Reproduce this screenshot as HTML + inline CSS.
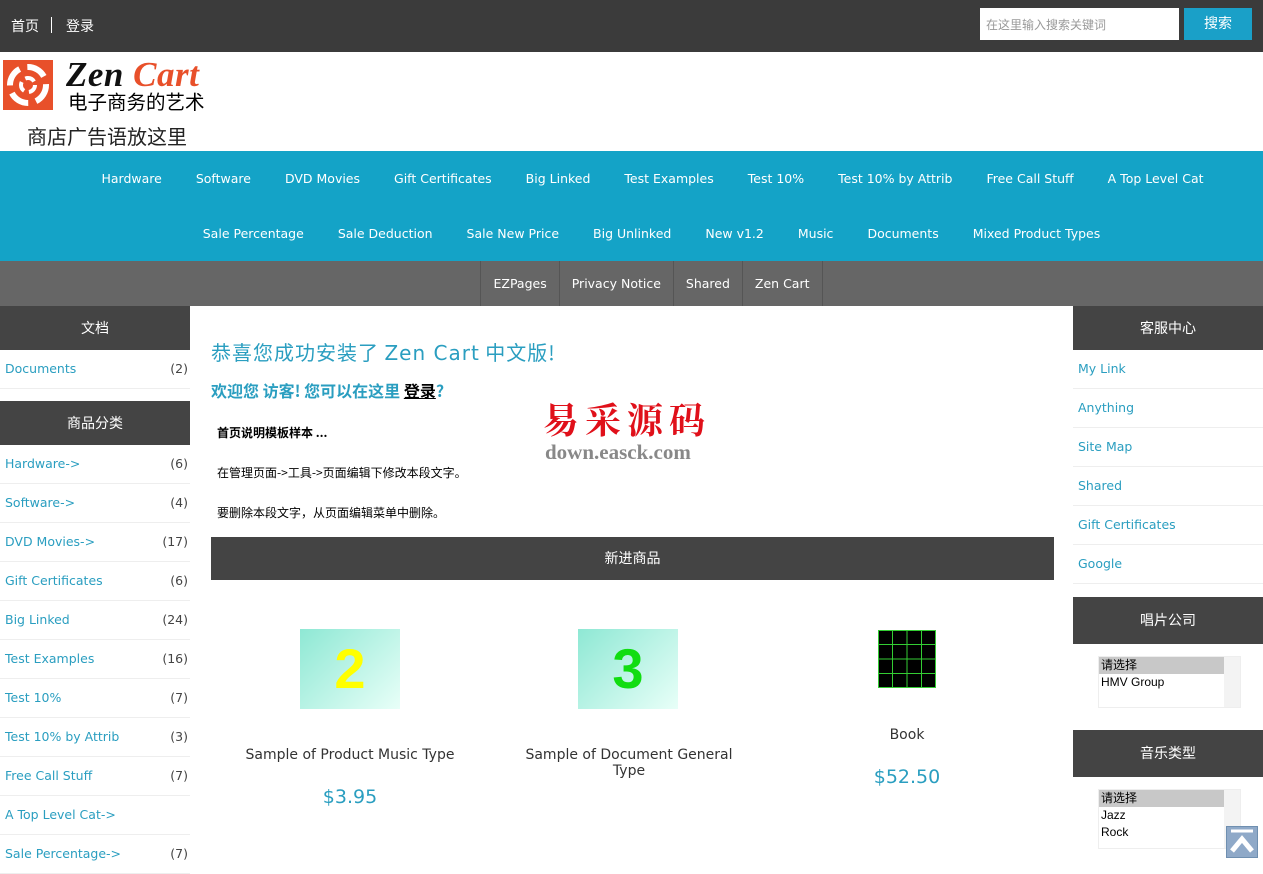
<!DOCTYPE html>
<html><head><meta charset="utf-8"><style>
*{margin:0;padding:0;box-sizing:border-box}
body{width:1263px;height:863px;overflow:hidden;background:#fff;font-family:"DejaVu Sans","Noto Sans CJK SC",sans-serif;font-size:12px;color:#000;position:relative}
.top{height:52px;background:#3b3b3b;position:relative}
.top .l{position:absolute;left:11px;top:16px;color:#fff;font-size:14px;font-family:"Liberation Sans","Noto Sans CJK SC",sans-serif}
.top .l span{display:inline-block;width:1px;height:16px;background:#fff;margin:0 14px -2px 12px}
.top input{position:absolute;left:980px;top:8px;width:199px;height:32px;border:0;background:#fff;font-size:12px;padding-left:6px;color:#999;font-family:"Noto Sans CJK SC",sans-serif}
.top .btn{position:absolute;left:1184px;top:8px;width:68px;height:32px;background:#1aa0c8;color:#fff;font-size:14px;text-align:center;line-height:32px}
.hdr{height:99px;position:relative}
.nav{background:#14a3c7;height:110px;color:#fff;font-size:12.5px}
.nav div{height:55px;display:flex;justify-content:center;align-items:center}
.nav a{padding:0 17px;white-space:nowrap}
.sub{background:#666;height:45px;display:flex;justify-content:center;padding-left:40px}
.sub a{color:#fff;border-left:1px solid #555;padding:0 12px;line-height:45px;font-size:12.5px}
.sub a:last-child{border-right:1px solid #555}
.col{position:absolute;top:306px;width:190px}
.h{background:#444;color:#fff;height:44px;line-height:44px;text-align:center;font-size:14px;font-family:"Noto Sans CJK SC",sans-serif}
.li{height:39px;border-bottom:1px solid #eee;color:#2a9ec0;font-size:12.5px;line-height:38px;padding-left:5px;position:relative}
.li b{position:absolute;right:2px;font-weight:normal;color:#444}
.sel{margin:12px 0 0 25px;width:143px;height:52px;border:1px solid #eee;font-size:12px;position:relative;overflow:hidden;font-family:"Liberation Sans","Noto Sans CJK SC",sans-serif}
.sel div{line-height:17px;padding-left:2px}
.sel .s{background:#c8c8c8;width:126px}
.sel i{position:absolute;right:0;top:0;width:16px;height:100%;background:#f3f3f3}
.p{position:absolute;text-align:center;font-size:14px;color:#333}
.pr{position:absolute;text-align:center;font-size:19px;color:#2a9ec0}
</style></head><body>
<div class="top"><div class="l">首页<span></span>登录</div><input value="在这里输入搜索关键词"><div class="btn">搜索</div></div>
<div class="hdr">
<svg style="position:absolute;left:3px;top:8px" width="50" height="50"><rect width="50" height="50" fill="#e8502a"/><circle cx="25" cy="25" r="18" fill="none" stroke="#fff" stroke-width="6" stroke-dasharray="20 8"/><circle cx="25" cy="25" r="7" fill="none" stroke="#fff" stroke-width="4" stroke-dasharray="10 5"/></svg>
<div style="position:absolute;left:66px;top:4px;font-family:'Liberation Serif',serif;font-style:italic;font-weight:bold;font-size:35px;line-height:38px;letter-spacing:0.5px"><span style="color:#111">Zen</span> <span style="color:#e8502a">Cart</span></div>
<div style="position:absolute;left:68px;top:37px;font-size:19.5px;line-height:24px;font-family:'Noto Sans CJK SC',sans-serif">电子商务的艺术</div>
<div style="position:absolute;left:27px;top:69px;font-size:20px;color:#222;font-family:'Noto Sans CJK SC',sans-serif">商店广告语放这里</div>
</div>
<div class="nav"><div style="padding-left:42px"><a>Hardware</a><a>Software</a><a>DVD Movies</a><a>Gift Certificates</a><a>Big Linked</a><a>Test Examples</a><a>Test 10%</a><a>Test 10% by Attrib</a><a>Free Call Stuff</a><a>A Top Level Cat</a></div>
<div style="padding-left:40px"><a>Sale Percentage</a><a>Sale Deduction</a><a>Sale New Price</a><a>Big Unlinked</a><a>New v1.2</a><a>Music</a><a>Documents</a><a>Mixed Product Types</a></div></div>
<div class="sub"><a>EZPages</a><a>Privacy Notice</a><a>Shared</a><a>Zen Cart</a></div>
<div class="col" style="left:0">
<div class="h">文档</div><div class="li">Documents<b>(2)</b></div>
<div style="height:12px"></div>
<div class="h">商品分类</div>
<div class="li">Hardware-&gt;<b>(6)</b></div><div class="li">Software-&gt;<b>(4)</b></div><div class="li">DVD Movies-&gt;<b>(17)</b></div><div class="li">Gift Certificates<b>(6)</b></div><div class="li">Big Linked<b>(24)</b></div><div class="li">Test Examples<b>(16)</b></div><div class="li">Test 10%<b>(7)</b></div><div class="li">Test 10% by Attrib<b>(3)</b></div><div class="li">Free Call Stuff<b>(7)</b></div><div class="li">A Top Level Cat-&gt;<b></b></div><div class="li">Sale Percentage-&gt;<b>(7)</b></div>
</div>
<div class="col" style="left:1073px">
<div class="h">客服中心</div>
<div class="li">My Link</div><div class="li">Anything</div><div class="li">Site Map</div><div class="li">Shared</div><div class="li">Gift Certificates</div><div class="li">Google</div>
<div style="height:13px"></div>
<div class="h" style="height:47px;line-height:47px">唱片公司</div>
<div class="sel"><div class="s">请选择</div><div>HMV Group</div><i></i></div>
<div style="height:22px"></div>
<div class="h" style="height:47px;line-height:47px">音乐类型</div>
<div class="sel" style="height:60px"><div class="s">请选择</div><div>Jazz</div><div>Rock</div><i></i></div>
</div>
<div style="position:absolute;left:1226px;top:826px;width:32px;height:32px;background:#8fa9c8;border:1px solid #6f8fb0"><svg width="30" height="30"><path d="M4 4H26" stroke="#fff" stroke-width="3"/><path d="M5 24L15 12L25 24" stroke="#fff" stroke-width="5" fill="none"/></svg></div>
<div style="position:absolute;left:211px;top:337px;font-size:20px;color:#2a9ec0;font-family:'Noto Sans CJK SC',sans-serif;letter-spacing:1px">恭喜您成功安装了 <span style="font-family:'DejaVu Sans'">Zen Cart</span> 中文版!</div>
<div style="position:absolute;left:211px;top:378px;font-size:16px;font-weight:bold;color:#2a9ec0;font-family:'Noto Sans CJK SC',sans-serif">欢迎您 访客! 您可以在这里 <u style="color:#000">登录</u>?</div>
<div style="position:absolute;left:543px;top:393px;font-size:36px;color:#e0101a;font-family:'Noto Serif CJK SC',serif;font-weight:bold;letter-spacing:6px">易采源码</div>
<div style="position:absolute;left:545px;top:440px;font-size:21px;color:#888;font-family:'Liberation Serif',serif;font-weight:bold">down.easck.com</div>
<div style="position:absolute;left:217px;top:424px;font-size:12px;font-weight:bold;font-family:'Noto Sans CJK SC',sans-serif">首页说明模板样本 ...</div>
<div style="position:absolute;left:217px;top:464px;font-size:12px;font-family:'Noto Sans CJK SC',sans-serif">在管理页面-&gt;工具-&gt;页面编辑下修改本段文字。</div>
<div style="position:absolute;left:217px;top:504px;font-size:12px;font-family:'Noto Sans CJK SC',sans-serif">要删除本段文字，从页面编辑菜单中删除。</div>
<div style="position:absolute;left:211px;top:537px;width:843px;height:43px;background:#444;color:#fff;text-align:center;line-height:43px;font-size:14px;font-family:'Noto Sans CJK SC',sans-serif">新进商品</div>
<div style="position:absolute;left:300px;top:629px;width:100px;height:80px;background:linear-gradient(135deg,#8ee8d4,#e8fff8);color:#ff0;font-size:56px;font-weight:bold;text-align:center;line-height:80px;font-family:'Liberation Sans'">2</div>
<div style="position:absolute;left:578px;top:629px;width:100px;height:80px;background:linear-gradient(135deg,#8ee8d4,#e8fff8);color:#1d1;font-size:56px;font-weight:bold;text-align:center;line-height:80px;font-family:'Liberation Sans'">3</div>
<svg style="position:absolute;left:878px;top:630px" width="58" height="58"><rect width="58" height="58" fill="#000"/><path d="M0.5 0.5H57.5V57.5H0.5Z M14.5 0V58 M29 0V58 M43.5 0V58 M0 14.5H58 M0 29H58 M0 43.5H58" fill="none" stroke="#3c3"/></svg>
<div class="p" style="left:211px;top:747px;width:278px">Sample of Product Music Type</div>
<div class="pr" style="left:211px;top:786px;width:278px">$3.95</div>
<div class="p" style="left:510px;top:747px;width:238px;line-height:16px">Sample of Document General Type</div>
<div class="p" style="left:768px;top:727px;width:278px">Book</div>
<div class="pr" style="left:768px;top:766px;width:278px">$52.50</div>
</body></html>
